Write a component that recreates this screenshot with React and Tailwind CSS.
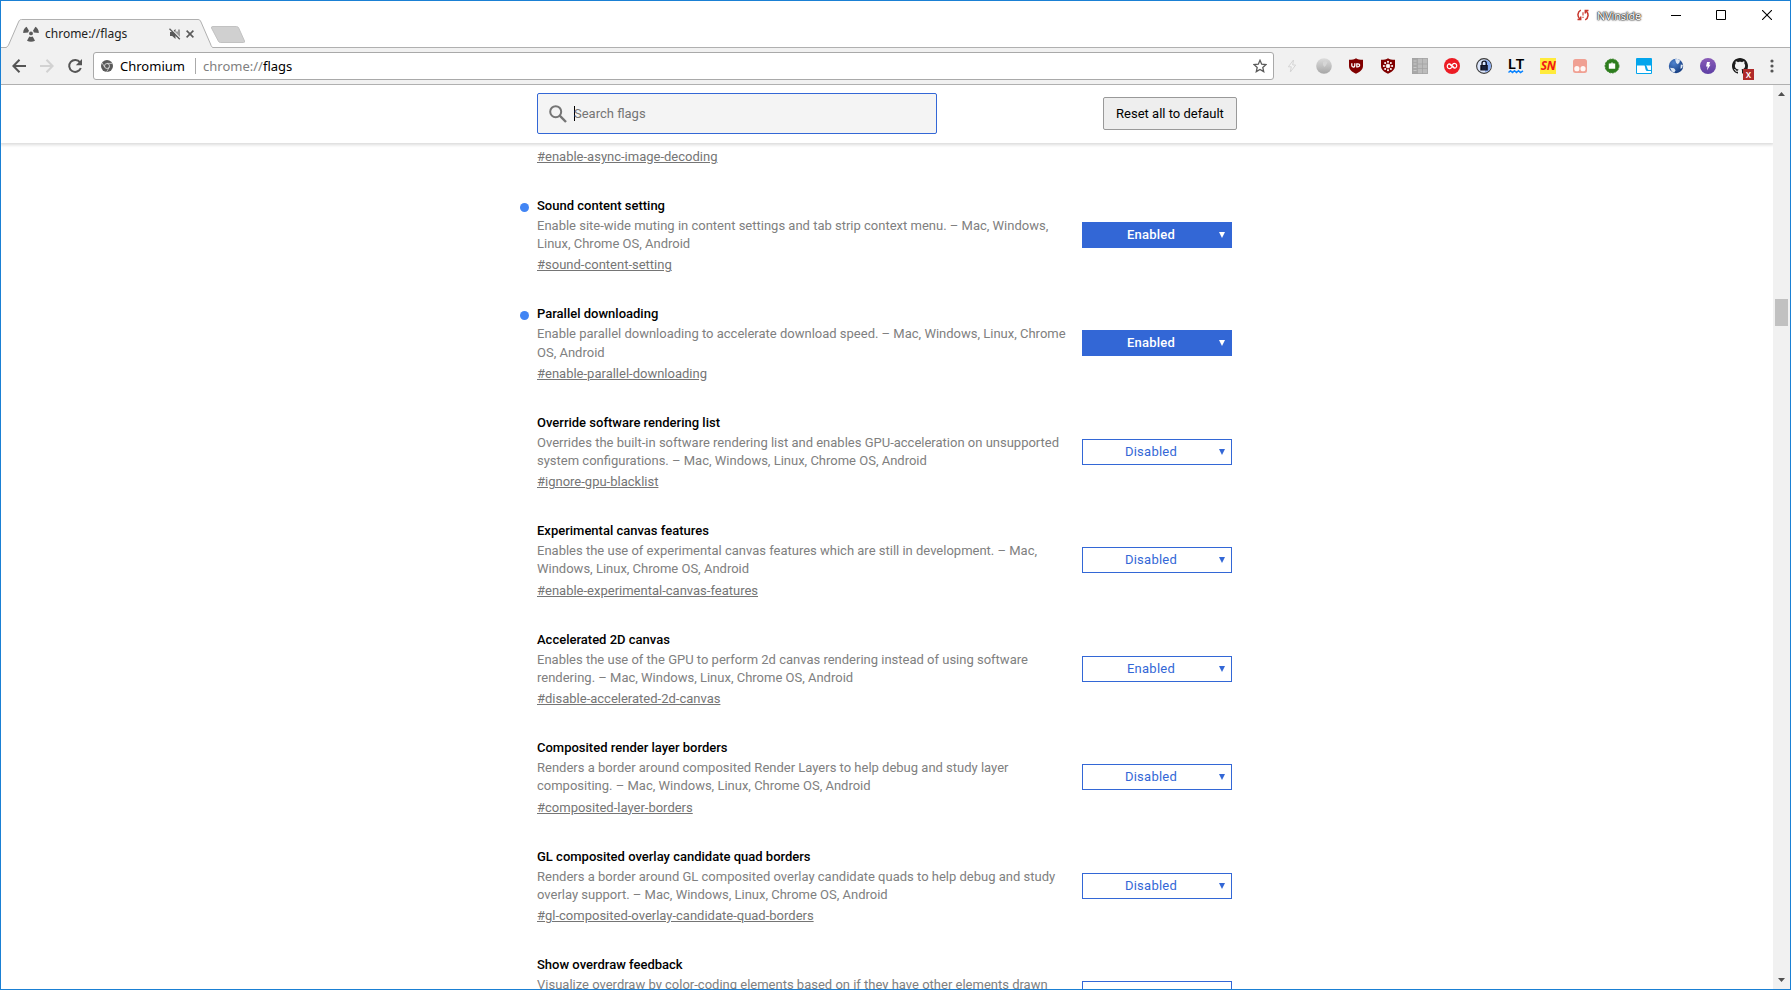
import React from "react";

const UI = "font-['Noto_Sans','Open_Sans',sans-serif]";

const flags = [
  { on: true, title: "Sound content setting", lines: ["Enable site-wide muting in content settings and tab strip context menu. – Mac, Windows,", "Linux, Chrome OS, Android"], id: "sound-content-setting", value: "Enabled" },
  { on: true, title: "Parallel downloading", lines: ["Enable parallel downloading to accelerate download speed. – Mac, Windows, Linux, Chrome", "OS, Android"], id: "enable-parallel-downloading", value: "Enabled" },
  { title: "Override software rendering list", lines: ["Overrides the built-in software rendering list and enables GPU-acceleration on unsupported", "system configurations. – Mac, Windows, Linux, Chrome OS, Android"], id: "ignore-gpu-blacklist", value: "Disabled" },
  { title: "Experimental canvas features", lines: ["Enables the use of experimental canvas features which are still in development. – Mac,", "Windows, Linux, Chrome OS, Android"], id: "enable-experimental-canvas-features", value: "Disabled" },
  { title: "Accelerated 2D canvas", lines: ["Enables the use of the GPU to perform 2d canvas rendering instead of using software", "rendering. – Mac, Windows, Linux, Chrome OS, Android"], id: "disable-accelerated-2d-canvas", value: "Enabled" },
  { title: "Composited render layer borders", lines: ["Renders a border around composited Render Layers to help debug and study layer", "compositing. – Mac, Windows, Linux, Chrome OS, Android"], id: "composited-layer-borders", value: "Disabled" },
  { title: "GL composited overlay candidate quad borders", lines: ["Renders a border around GL composited overlay candidate quads to help debug and study", "overlay support. – Mac, Windows, Linux, Chrome OS, Android"], id: "gl-composited-overlay-candidate-quad-borders", value: "Disabled" },
  { title: "Show overdraw feedback", lines: ["Visualize overdraw by color-coding elements based on if they have other elements drawn"], value: "" },
];

function Radiation() {
  return (
    <svg width="16" height="16" viewBox="0 0 16 16" fill="#5a5a5a">
      <circle cx="8" cy="7.4" r="1.9" />
      <path d="M5.2 6.6 0.2 6.9C0.1 4.4 1.4 2 3.6 0.8L6 4.8A4 4 0 0 0 5.200 6.600zM10.800 6.600 15.800 6.900C15.900 4.400 14.600 2 12.400 0.800L10 4.800A4 4 0 0 1 10.800 6.600zM6.300 10.500 4 14.800C6.500 16.100 9.500 16.100 12 14.800L9.700 10.500A4 4 0 0 1 6.300 10.500z" />
    </svg>
  );
}

function MutedSpeaker() {
  return (
    <svg width="12" height="12" viewBox="0 0 12 12" fill="#5a5a5a">
      <path d="M1 4h2.200L6.500 1v10L3.200 8H1z" />
      <path d="M8 3.500v5M10 1.500v9" stroke="#5a5a5a" strokeWidth="1.100" fill="none" />
      <path d="M1.400 0.200 11.600 10.600" stroke="#f1f1f1" strokeWidth="1.300" />
      <path d="M0.500 0.800 10.800 11.300" stroke="#5a5a5a" strokeWidth="1.300" />
    </svg>
  );
}

function ChromiumMark() {
  return (
    <svg width="12" height="12" viewBox="0 0 12 12">
      <circle cx="6" cy="6" r="6" fill="#5a5a5a" />
      <circle cx="6" cy="6" r="2.500" fill="none" stroke="#e8e8e8" strokeWidth="0.800" />
      <path d="M6 3.400h5.300M3.750 7.300 1.100 2.900M8.250 7.300 5.600 11.900" stroke="#e8e8e8" strokeWidth="0.700" />
    </svg>
  );
}

const extensions = [
  <svg key="bolt" width="16" height="16" viewBox="0 0 16 16"><path d="M9.500 2 4.300 8.800h3L6.300 14l5.400-7H8.700z" fill="#f4f4f4" stroke="#d5d5d5" strokeWidth="1" /></svg>,
  <svg key="sphere" width="16" height="16" viewBox="0 0 16 16">
    <defs><linearGradient id="sph" x1="0" y1="0" x2="0" y2="1"><stop offset="0" stopColor="#dcdcdc" /><stop offset="0.500" stopColor="#c2c2c2" /><stop offset="1" stopColor="#a6a6a6" /></linearGradient></defs>
    <circle cx="8" cy="8" r="7.800" fill="url(#sph)" />
    <path d="M7 4c1.500-1.200 3.500-1 4.500.5L9.800 7.500 8.500 9 7 7z" fill="#d6d6d6" />
  </svg>,
  <svg key="ub" width="16" height="16" viewBox="0 0 16 16">
    <path d="M8 .2C6.500 1.300 4 1.700 1 1.800V8c0 3.500 3 6 7 7.800 4-1.800 7-4.300 7-7.800V1.800C12 1.700 9.500 1.300 8 .2z" fill="#800000" />
    <path d="M3.800 5.300v2.300c0 1.900 3 1.900 3 0V5.300M8.800 5.800v3h1.100c2.300 0 2.300-3 0-3z" fill="none" stroke="#fff" strokeWidth="1.300" />
  </svg>,
  <svg key="ubx" width="16" height="16" viewBox="0 0 16 16">
    <path d="M8 .2C6.500 1.300 4 1.700 1 1.800V8c0 3.500 3 6 7 7.800 4-1.800 7-4.300 7-7.800V1.800C12 1.700 9.500 1.300 8 .2z" fill="#800000" />
    <g fill="#fff"><circle cx="8" cy="8" r="2" /><circle cx="8" cy="3.800" r="1" /><circle cx="8" cy="12.200" r="1" /><circle cx="3.900" cy="8" r="1" /><circle cx="12.100" cy="8" r="1" /><circle cx="5.100" cy="5" r="1" /><circle cx="10.900" cy="5" r="1" /><circle cx="5.100" cy="11" r="1" /><circle cx="10.900" cy="11" r="1" /></g>
    <path d="M5.100 5l5.800 6M10.900 5l-5.800 6M8 4v8M4 8h8" stroke="#fff" strokeWidth="0.400" />
  </svg>,
  <svg key="grid" width="16" height="16" viewBox="0 0 16 16">
    <path d="M0 0h16v16H0z" fill="#bcbcbc" /><path d="M0 0h5.500v16H0z" fill="#a8a8a8" />
    <path d="M.5.500h15v15H.5zM5.500 0v16M5.500 6h10M5.500 10.500h10M10.500 0v16" stroke="#a2a2a2" strokeWidth="0.700" fill="none" />
    <path d="M1.500 3h3M1.500 6h3M1.500 9.500h3M1.500 12.500h3" stroke="#d0d0d0" strokeWidth="0.800" />
  </svg>,
  <svg key="authy" width="16" height="16" viewBox="0 0 16 16">
    <circle cx="8" cy="8" r="8" fill="#ec1c24" />
    <path d="M5.600 6.100 8.300 8.800M7.700 7.200 10.400 9.900M7.700 7.200C6 5.500 4.800 5.600 3.900 6.700 2.800 8 3.200 9.600 4.400 10.300 5.700 11 6.800 10.400 7.400 9.700M8.300 8.800C10 10.500 11.200 10.400 12.100 9.300 13.200 8 12.800 6.400 11.600 5.700 10.300 5 9.200 5.600 8.600 6.300" fill="none" stroke="#fff" strokeWidth="1.200" strokeLinecap="round" />
  </svg>,
  <svg key="lock" width="16" height="16" viewBox="0 0 16 16">
    <circle cx="8" cy="8" r="7.400" fill="#dbe5fa" stroke="#3c3c3c" strokeWidth="1.100" />
    <path d="M9 2a6 6 0 0 1 0 12z" fill="#86aaf0" />
    <path d="M4.300 7h7.500v5.500H4.300z" fill="#101020" /><path d="M6 7V5.200c0-2.700 4.300-2.700 4.300 0V7" fill="none" stroke="#101020" strokeWidth="1.300" />
    <path d="M6 9h4.500M6 11h4.500" stroke="#344a80" strokeWidth="0.600" />
  </svg>,
  <span key="lt" className="flex h-4 w-4 flex-col items-center">
    <span className="h-[11px] font-['Noto_Sans',sans-serif] text-[15px] leading-[10px] font-semibold text-black">LT</span>
    <svg width="16" height="5" viewBox="0 0 16 5"><path d="M.5 3.500 2.500 1.800 4.500 3.500 6.500 1.800 8.500 3.500 10.500 1.800 12.500 3.500 15 1.800" fill="none" stroke="#0a84ff" strokeWidth="1.500" /></svg>
  </span>,
  <span key="sn" className="flex h-4 w-4 items-center justify-center bg-[#ffeb3b] font-['Noto_Sans',sans-serif] text-[12px] leading-none font-bold tracking-[-0.500px] text-[#f01818] italic">SN</span>,
  <svg key="tamper" width="16" height="16" viewBox="0 0 16 16"><rect x="1" y="1" width="14" height="14" rx="2.500" fill="#f0a093" /><circle cx="4.900" cy="10.700" r="2.600" fill="#fff8f6" /><circle cx="11" cy="10.700" r="2.600" fill="#fff8f6" /></svg>,
  <svg key="green" width="16" height="16" viewBox="0 0 16 16"><circle cx="8" cy="8" r="7" fill="#2e7d1e" stroke="#2e7d1e" strokeWidth="0.800" strokeDasharray="2 1" /><path d="M4.800 5.500h1.700L8 3.900l1.500 1.600h1.700v5.200H4.800z" fill="#fff" /><circle cx="8" cy="4.800" r="0.600" fill="#2e7d1e" /></svg>,
  <svg key="blue" width="16" height="16" viewBox="0 0 16 16"><rect width="16" height="16" rx="1" fill="#03a5ec" /><path d="M1 7.500h7.500c1 1.500.5 5 2.500 5.500h4v2H1z" fill="#fff" /><path d="M10 7.500h5v4.500h-2.500c-1.300-.5-1-3.500-2.500-4.500z" fill="#f4fbff" /></svg>,
  <svg key="globe" width="16" height="16" viewBox="0 0 16 16">
    <defs><radialGradient id="glb" cx="0.350" cy="0.300" r="0.800"><stop offset="0" stopColor="#4f83cf" /><stop offset="1" stopColor="#0f3578" /></radialGradient></defs>
    <circle cx="8" cy="8" r="7.200" fill="url(#glb)" />
    <path d="M7 1.200 10 1l2 1.400-.6 2L9.800 6.200 8.200 5zM12.800 6.500l2.100.6-.8 3-1.700.6zM2 9.800l4 .5 1.600 2-1.300 2.200-2.400-1z" fill="#dfe8f4" />
  </svg>,
  <svg key="purple" width="16" height="16" viewBox="0 0 16 16">
    <defs><linearGradient id="pur" x1="0" y1="0" x2="0" y2="1"><stop offset="0" stopColor="#8a5cb8" /><stop offset="1" stopColor="#5d3fa4" /></linearGradient></defs>
    <circle cx="8" cy="8" r="8" fill="url(#pur)" /><path d="M7 4h3L9.200 6.700h1.300L7 12.200l.6-3.800H6z" fill="#fff" />
  </svg>,
  <span key="github" className="relative block h-4 w-4">
    <svg width="16" height="16" viewBox="0 0 16 16"><path fill="#1b1b1b" d="M8 0C3.580 0 0 3.580 0 8c0 3.540 2.290 6.530 5.470 7.590.4.070.55-.17.55-.38 0-.19-.01-.82-.01-1.490-2.010.37-2.530-.49-2.690-.94-.09-.23-.48-.94-.82-1.130-.28-.15-.68-.52-.01-.53.63-.01 1.080.58 1.230.82.72 1.210 1.870.87 2.330.66.070-.52.280-.87.510-1.070-1.780-.2-3.640-.89-3.640-3.950 0-.87.310-1.590.82-2.150-.08-.2-.36-1.020.080-2.120 0 0 .67-.21 2.200.82.640-.18 1.320-.27 2-.27s1.360.090 2 .27c1.530-1.040 2.200-.82 2.200-.82.440 1.100.160 1.920.080 2.120.510.560.82 1.270.82 2.150 0 3.070-1.870 3.750-3.650 3.950.290.250.540.730.540 1.480 0 1.070-.01 1.930-.01 2.200 0 .210.150.460.550.380A8.010 8.010 0 0 0 16 8c0-4.420-3.580-8-8-8z" /></svg>
    <span className="absolute top-[11px] left-[11px] flex h-[11px] w-[11px] items-center justify-center bg-[#b02a2a] pb-px font-['Noto_Sans',sans-serif] text-[10px] leading-none font-medium text-white">x</span>
  </span>,
];

function TabStrip() {
  return (
    <div className="flex h-[47px] items-start">
      <div className="relative mt-[19px] ml-[5px] h-[28px] w-[207px]">
        <svg className="absolute top-0 left-0" width="207" height="29" viewBox="0 0 207 29">
          <path d="M0 28.500C2 27.500 2 27 3 25L12.500 3C13.500 1 14 .5 15.500.5H192C193.500.5 194 1 195 3L204.500 25C205.500 27.500 205.500 28 207 28.500V29H0z" fill="#f1f1f1" />
          <path d="M0 28.500C2 27.500 2 27 3 25L12.500 3C13.500 1 14 .5 15.500.5H192C193.500.5 194 1 195 3L204.500 25C205.500 27.500 205.500 28 207 28.500" fill="none" stroke="#b0b0b0" />
        </svg>
        <div className="relative flex h-full items-center pt-px pl-[17px]">
          <Radiation />
          <span className={`${UI} ml-[6px] w-[124px] text-[12px] leading-4 text-[#222]`}>chrome://flags</span>
          <MutedSpeaker />
          <svg className="ml-[5px]" width="8" height="8" viewBox="0 0 8 8"><path d="M.6.600 7.400 7.400M7.400.600.6 7.400" stroke="#5a5a5a" strokeWidth="1.600" /></svg>
        </div>
      </div>
      <svg className="mt-[25px] ml-[-3px]" width="37" height="19" viewBox="0 0 37 19">
        <path d="M3 1.500H26.500Q28 1.500 28.700 3L34.500 16Q35 17.500 33.500 17.500H10.500Q9 17.500 8.300 16L1.500 3Q1 1.500 3 1.500z" fill="#d0d0d0" stroke="#c2c2c2" />
      </svg>
      <div className="ml-auto flex h-[30px] items-center">
        <svg width="12" height="12" viewBox="0 0 12 12" fill="none" stroke="#c8372d" strokeWidth="1.500">
          <path d="M3.800 1.200C.2 3 .2 7.500 2.800 10M.5 10.500h3.200V7.500M8.200 10.800C11.800 9 11.800 4.500 9.200 2M11.500 1.500H8.300V4.500" />
          <path d="M6 3.300v3.200M6 7.800v1.200" strokeWidth="1.100" />
        </svg>
        <span className={`${UI} ml-[8px] w-[48px] pt-px text-[11px] leading-4 tracking-[-0.200px] text-white [text-shadow:0_0_1px_#222,0_0_1px_#222,0_0_2px_#333,0_0_2px_#555]`}>NVinside</span>
        <svg className="ml-[26px]" width="10" height="10" viewBox="0 0 10 10"><path d="M0 5.500h10" stroke="#000" /></svg>
        <svg className="ml-[35px]" width="10" height="10" viewBox="0 0 10 10"><path d="M.5.500h9v9h-9z" fill="none" stroke="#000" /></svg>
        <svg className="mr-[18px] ml-[36px]" width="10" height="10" viewBox="0 0 10 10"><path d="M0 0 10 10M10 0 0 10" stroke="#000" strokeWidth="1.100" /></svg>
      </div>
    </div>
  );
}

function Toolbar() {
  return (
    <div className="flex h-[38px] items-center border-t border-b border-[#b0b0b0] bg-[#f1f1f1] pl-[4px]">
      <span className="flex w-7 justify-center"><svg width="14" height="14" viewBox="0 0 14 14" fill="none" stroke="#555" strokeWidth="2"><path d="M14 7H1.500M7.500.800 1.400 7l6.100 6.200" /></svg></span>
      <span className="flex w-7 justify-center"><svg width="14" height="14" viewBox="0 0 14 14" fill="none" stroke="#d2d2d2" strokeWidth="2"><path d="M0 7h12.500M6.500.800 12.600 7l-6.100 6.200" /></svg></span>
      <span className="flex w-7 justify-center"><svg width="16" height="16" viewBox="0 0 16 16"><path d="M13 4.300A6 6 0 1 0 13.800 10" fill="none" stroke="#555" strokeWidth="2" /><path d="M15 1v6.200H8.800z" fill="#555" /></svg></span>
      <div className="ml-[4px] flex h-[28px] w-[1181px] items-center rounded-[3px] border border-[#a9a9a9] bg-white pl-[7px]">
        <ChromiumMark />
        <span className={`${UI} ml-[7px] w-[75px] text-[13px] leading-5 text-black`}>Chromium</span>
        <span className="h-4 w-px bg-[#aaa]" />
        <span className={`${UI} ml-[7px] text-[13px] leading-5 text-[#808080]`}>chrome://<span className="text-black">flags</span></span>
        <svg className="mr-[6px] ml-auto" width="14" height="14" viewBox="0 0 14 14"><path d="M7 1.300 8.700 5.200l4.300.4-3.200 2.800.9 4.200L7 10.400 3.300 12.600l.9-4.200L1 5.600l4.300-.4z" fill="none" stroke="#5a5a5a" strokeWidth="1.300" /></svg>
      </div>
      <div className="ml-[2px] flex items-center">
        {extensions.map((icon, i) => (
          <span key={i} className="flex w-8 justify-center">{icon}</span>
        ))}
        <span className="flex w-8 justify-center"><svg width="4" height="14" viewBox="0 0 4 14" fill="#555"><circle cx="2" cy="2" r="1.600" /><circle cx="2" cy="7" r="1.600" /><circle cx="2" cy="12" r="1.600" /></svg></span>
      </div>
    </div>
  );
}

function FlagSelect({ value, on }) {
  return (
    <div className={`mt-[27px] flex h-[26px] w-[150px] shrink-0 items-center border border-[#3367d6] pr-[6px] ${on ? "bg-[#3367d6] text-white" : "bg-white text-[#3367d6]"}`}>
      <span className={`flex-1 text-center text-[13px] leading-5 tracking-[0.250px] ${on ? "font-medium" : ""}`}>{value}</span>
      <svg width="6" height="6" viewBox="0 0 6 6" fill="currentColor"><path d="M0 0h6L3 6z" /></svg>
    </div>
  );
}

export default function App() {
  return (
    <div className="flex h-[990px] w-[1791px] flex-col overflow-hidden border border-[#1a80d4] bg-white font-['Roboto',sans-serif]">
      <div className="-mt-px"><TabStrip /></div>
      <Toolbar />
      <div className="flex min-h-0 flex-1">
        <div className="flex w-[1772px] flex-col overflow-hidden">
          <header className="z-10 flex h-[58px] shrink-0 items-start bg-white pt-[8px] pl-[536px] shadow-[0_1px_3px_1px_rgba(0,0,0,0.14)]">
            <div className="flex h-[41px] w-[400px] items-center rounded-[2px] border border-[#3367d6] bg-[#f4f4f4] pl-[11px]">
              <svg width="18" height="18" viewBox="0 0 18 18" fill="none" stroke="#757575" strokeWidth="2"><circle cx="6.700" cy="6.700" r="5.500" /><path d="M10.700 10.700 17 17" strokeWidth="2.400" /></svg>
              <span className="ml-[7px] h-[15px] w-px bg-black" />
              <span className="-ml-px text-[13px] leading-5 text-[#757575]">Search flags</span>
            </div>
            <button className="mt-[4px] ml-[166px] h-[33px] w-[134px] rounded-[2px] border border-[#999] bg-[#eee] text-[13px] text-black">Reset all to default</button>
          </header>
          <main className="flex shrink-0 flex-col pl-[519px] text-[13px]">
            <a className="mt-[5px] ml-[17px] h-[47px] shrink-0 leading-[18px] text-[#757575] underline">#enable-async-image-decoding</a>
            {flags.map((f) => (
              <section key={f.title} className="flex h-[108.430px] shrink-0">
                <span className={`mt-[8px] mr-[8px] h-[9px] w-[9px] shrink-0 rounded-full ${f.on ? "bg-[#4285f4]" : ""}`} />
                <div className="w-[545px] shrink-0">
                  <h3 className="leading-[22px] font-medium text-black">{f.title}</h3>
                  <p className="leading-[18.200px] whitespace-nowrap text-[#808080]">
                    {f.lines[0]}
                    <br />
                    {f.lines[1]}
                  </p>
                  {f.id && <a className="mt-[2px] block leading-[20px] text-[#757575] underline">#{f.id}</a>}
                </div>
                <FlagSelect value={f.value} on={f.on} />
              </section>
            ))}
          </main>
        </div>
        <div className="flex w-[17px] flex-col items-center bg-[#f1f1f1]">
          <svg className="mt-[7px]" width="7" height="4" viewBox="0 0 7 4"><path d="M0 4 3.500 0 7 4z" fill="#505050" /></svg>
          <span className="mt-[203px] h-[27px] w-[13px] bg-[#c1c1c1]" />
          <svg className="mt-auto mb-[7px]" width="7" height="4" viewBox="0 0 7 4"><path d="M0 0 3.500 4 7 0z" fill="#505050" /></svg>
        </div>
      </div>
    </div>
  );
}
